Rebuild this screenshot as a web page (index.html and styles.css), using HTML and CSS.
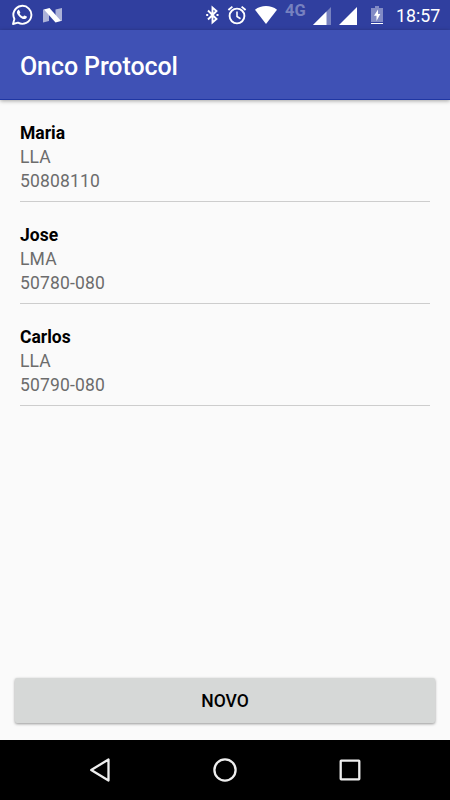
FILE: index.html
```
<!DOCTYPE html>
<html lang="pt-BR">
<head>
	<title>Onco Protocol</title>
	<meta charset="utf-8">
	<meta name="viewport" content="width=device-width, initial-scale=1">
	<link rel="stylesheet" href="styles.css">
</head>
<body>
	<div class="status-bar">
		<div class="notifications">
			<svg class="whatsapp" width="22" height="22" viewBox="0 0 22 22">
				<path d="M2 20l1.400-5A9 9 0 1 1 7 18.700z" fill="none" stroke="#fff" stroke-width="1.900" stroke-linejoin="round"/>
				<path d="M8.200 6.200c-.3-.5-.9-.4-1.300 0-2.200 2.200-.2 4.600 1.400 6.200 1.700 1.800 4.500 3.600 6.700 2.100.8-.6 1-1.400.8-1.900l-2.300-1.200c-.6-.2-1 1.200-1.500 1.200-1.200-.4-2.700-1.700-3.300-2.900-.1-.5.8-.9.6-1.500z" fill="#fff"/>
			</svg>
			<svg class="nougat" width="19" height="15" viewBox="0 0 19 15">
				<path d="M0 1.500h6V13L0 14.500zM12.500 1.500L19 0v13h-6.500z" fill="#fff" opacity=".6"/>
				<path d="M1 1.500L6.500 0 18 13l-5.500 1.500z" fill="#fff"/>
			</svg>
		</div>
		<div class="system-icons">
			<svg class="bluetooth" width="14" height="20" viewBox="0 0 14 20">
				<path d="M3 5.500l8.500 8.500-4 3.500v-15l4 3.500L3 14.500" fill="none" stroke="#fff" stroke-width="1.900"/>
				<path d="M1.200 9h2v2h-2zM11.500 9h2v2h-2z" fill="#fff"/>
			</svg>
			<svg class="alarm" width="20" height="20" viewBox="0 0 20 20">
				<g fill="none" stroke="#fff" stroke-width="1.900">
					<circle cx="10" cy="11" r="7.400"/>
					<path d="M1.400 5l4-3.400M18.600 5l-4-3.400"/>
					<path d="M10 6.500v5l3.500 2.200" stroke-width="1.600"/>
				</g>
			</svg>
			<svg class="wifi" width="22" height="18" viewBox="0 0 22 18">
				<path d="M0 3.800C6-1.200 16-1.200 22 3.800L11 18z" fill="#fff"/>
			</svg>
			<span class="network">4G</span>
			<svg class="signal" width="18" height="18" viewBox="0 0 18 18">
				<path d="M18 0v18H0z" fill="#fff" opacity=".35"/>
				<path d="M13.500 4.500V18H0z" fill="#fff"/>
			</svg>
			<svg class="signal-full" width="18" height="18" viewBox="0 0 18 18">
				<path d="M18 0v18H0z" fill="#fff"/>
			</svg>
			<svg class="battery" width="12" height="18" viewBox="0 0 12 18">
				<path d="M4 0h4v2h4v14H0V2h4z" fill="#fff" opacity=".4"/>
				<path d="M0 17h12v1H0zM7 3.500L3 9.700h2.500v5.300L9.300 8H7z" fill="#fff"/>
			</svg>
			<span class="clock">18:57</span>
		</div>
	</div>

	<header class="app-bar">
		<h1 class="title">Onco Protocol</h1>
	</header>

	<main class="content">
		<ul class="patients">
			<li class="patient">
				<strong class="name">Maria</strong>
				<span>LLA</span>
				<span>50808110</span>
			</li>
			<li class="patient">
				<strong class="name">Jose</strong>
				<span>LMA</span>
				<span>50780-080</span>
			</li>
			<li class="patient">
				<strong class="name">Carlos</strong>
				<span>LLA</span>
				<span>50790-080</span>
			</li>
		</ul>
		<button class="new-button" type="button">NOVO</button>
	</main>

	<nav class="nav-bar">
		<svg width="24" height="24" viewBox="0 0 24 24">
			<path d="M20.500 1.500v21L3.200 12z"/>
		</svg>
		<svg width="24" height="24" viewBox="0 0 24 24">
			<circle cx="12" cy="12" r="10.600"/>
		</svg>
		<svg width="24" height="24" viewBox="0 0 24 24">
			<rect x="2.700" y="2.700" width="18.600" height="18.600" rx=".5"/>
		</svg>
	</nav>
</body>
</html>
```
FILE: styles.css
```
* {
	box-sizing: border-box;
}

body {
	margin: 0;
	height: 100vh;
	display: flex;
	flex-direction: column;
	overflow: hidden;
	background: #fafafa;
	color: #000;
	font-family: Roboto, sans-serif;
	font-size: 17.5px;
	line-height: 24px;
}

svg {
	display: block;
	flex: none;
}

.status-bar {
	display: flex;
	justify-content: space-between;
	height: 30px;
	padding: 0 10px 0 11px;
	background: #303f9f;
	color: #fff;
}

.notifications,
.system-icons {
	display: flex;
	align-items: flex-start;
}

.whatsapp {
	margin-top: 4px;
}

.nougat {
	margin: 8px 0 0 10px;
}

.bluetooth {
	margin: 5px 8px 0 0;
}

.alarm {
	margin: 5px 8px 0 0;
}

.wifi {
	margin: 6px 8px 0 0;
}

.network {
	width: 22px;
	margin: 3px 6px 0 0;
	font-size: 16.5px;
	font-weight: 700;
	line-height: 16px;
	color: rgba(255, 255, 255, 0.35);
}

.signal {
	margin: 7px 8px 0 0;
}

.signal-full {
	margin: 7px 14px 0 0;
}

.battery {
	margin: 6px 13px 0 0;
}

.clock {
	width: 44px;
	margin-top: 4px;
	font-size: 17.8px;
	font-weight: 400;
}

.app-bar {
	display: flex;
	align-items: center;
	height: 70px;
	padding: 4px 20px 0;
	background: #3f51b5;
	border-bottom: 1px solid #1f36a3;
	box-shadow: 0 1px 4px rgba(0, 0, 0, 0.35);
}

.title {
	margin: 0;
	font-size: 25px;
	font-weight: 500;
	letter-spacing: -0.1px;
	color: #fff;
}

.content {
	flex: 1;
	display: flex;
	flex-direction: column;
	justify-content: space-between;
	padding: 0 15px 17px;
}

.patients {
	margin: 0;
	padding: 0 5px;
	list-style: none;
}

.patient {
	display: flex;
	flex-direction: column;
	height: 102px;
	padding-top: 21px;
	border-bottom: 1px solid #cdcdcd;
	color: #6c6c6c;
	letter-spacing: 0.15px;
}

.name {
	font-weight: 700;
	letter-spacing: 0;
	color: #000;
}

.new-button {
	height: 45px;
	padding: 0;
	border: 0;
	border-radius: 2px;
	background: #d6d8d7;
	box-shadow: 0 1px 3px rgba(0, 0, 0, 0.4);
	color: #000;
	font: 500 17.5px Roboto, sans-serif;
}

.nav-bar {
	display: flex;
	justify-content: space-between;
	align-items: center;
	height: 60px;
	padding: 0 88px;
	background: #000;
}

.nav-bar svg {
	fill: none;
	stroke: #eee;
	stroke-width: 2.3;
	stroke-linejoin: round;
}
```
